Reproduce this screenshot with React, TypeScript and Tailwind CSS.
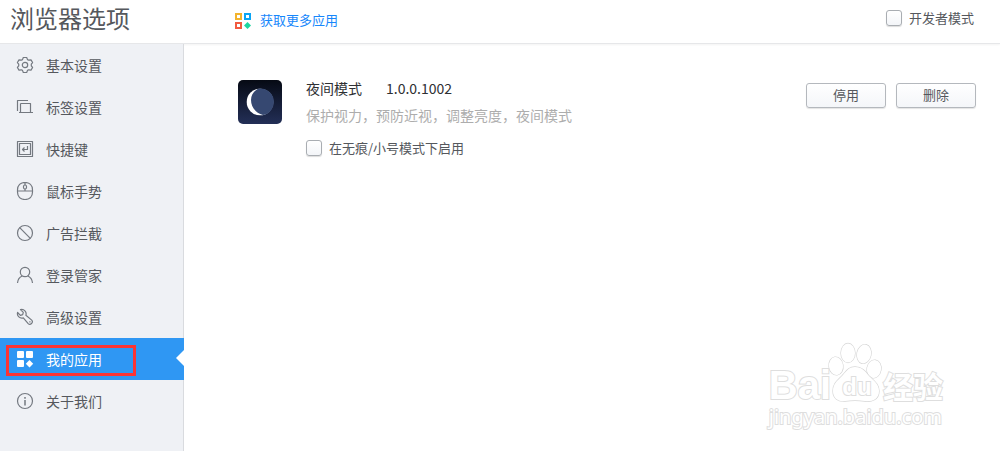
import React, { useState } from "react";

type IconProps = { children: React.ReactNode };

function LineIcon({ children }: IconProps) {
  return (
    <svg
      viewBox="0 0 18 18"
      className="size-[18px] shrink-0"
      fill="none"
      stroke="currentColor"
      strokeWidth="1.2"
      strokeLinejoin="round"
      aria-hidden="true"
    >
      {children}
    </svg>
  );
}

const items = [
  {
    label: "基本设置",
    icon: (
      <LineIcon>
        <path d="M7.300 1.500h3.400l.8 2.100 1.200.6 2.300-.4 1.600 2.800-1.300 1.500v1.800l1.300 1.500-1.600 2.800-2.300-.4-1.200.6-.8 2.100H7.300l-.8-2.100-1.200-.6-2.300.4-1.600-2.800 1.300-1.500V8.100L1.400 6.600 3 3.800l2.300.4 1.200-.6z" />
        <circle cx="9" cy="9" r="2.700" />
      </LineIcon>
    ),
  },
  {
    label: "标签设置",
    icon: (
      <LineIcon>
        <path d="M1.500 13V2.500H12M4.500 5.500H14.500V14.500M4.500 5.500V14.500M3 14.500H17" />
      </LineIcon>
    ),
  },
  {
    label: "快捷键",
    icon: (
      <LineIcon>
        <path d="M1.500 1.500h15v15h-15zM3.500 3.500h11v11h-11z" />
        <path d="M11.500 6v3.500H6.500M8.500 7.500l-2 2 2 2" />
      </LineIcon>
    ),
  },
  {
    label: "鼠标手势",
    icon: (
      <LineIcon>
        <path d="M1.500 8C1.500 3 4.500.5 9 .5S16.500 3 16.500 8v2c0 5-3 7.500-7.500 7.500S1.500 15 1.500 10zM1.500 9h15M9 .5V3M9 7v2" />
        <rect x="7.500" y="3" width="3" height="4" rx="1.500" />
      </LineIcon>
    ),
  },
  {
    label: "广告拦截",
    icon: (
      <LineIcon>
        <circle cx="9" cy="9" r="7.500" />
        <path d="M3.700 3.700l10.600 10.600" />
      </LineIcon>
    ),
  },
  {
    label: "登录管家",
    icon: (
      <LineIcon>
        <circle cx="9" cy="6" r="4.700" />
        <path d="M1.500 17c.3-3.500 2.300-6 4.700-7M16.500 17c-.3-3.500-2.300-6-4.700-7" />
      </LineIcon>
    ),
  },
  {
    label: "高级设置",
    icon: (
      <LineIcon>
        <path d="M4.500 1.600l2.800 2.800-.6 2.300-2.300.6-2.800-2.800C.6 8 4 11 7.300 9.900l4.900 5.700c2.200 2 5.500-1.200 3.500-3.500L9.900 7.300C11 4 8 .6 4.500 1.600z" />
        <path d="M13.300 13.800h1.200" />
      </LineIcon>
    ),
  },
  {
    label: "我的应用",
    icon: (
      <svg viewBox="0 0 18 18" className="size-[18px] shrink-0" fill="currentColor" aria-hidden="true">
        <rect x="1" y="1" width="7" height="7" rx="1" />
        <rect x="10" y="1" width="7" height="7" rx="1" />
        <rect x="1" y="10" width="7" height="7" rx="1" />
        <path d="M13.500 10l3.700 3.700-3.700 3.700-3.700-3.700z" />
      </svg>
    ),
  },
  {
    label: "关于我们",
    icon: (
      <LineIcon>
        <circle cx="9" cy="9" r="7.500" />
        <path d="M9 8v5.500M9 5v1.800" strokeWidth="1.500" />
      </LineIcon>
    ),
  },
];

function CheckOption({ id, label }: { id: string; label: string }) {
  return (
    <div className="flex items-center gap-[7px]">
      <input
        id={id}
        type="checkbox"
        className="size-4 appearance-none rounded-[3px] border border-[#a9adb2] bg-linear-to-b from-white to-[#f3f5f8] shadow-[0_1px_1px_#dddddd] checked:bg-[#2f97f3]"
      />
      <label htmlFor={id} className="text-[13px] leading-5 text-[#55585d]">
        {label}
      </label>
    </div>
  );
}

function ActionButton({ children }: { children: React.ReactNode }) {
  return (
    <button
      type="button"
      className="flex h-[25px] w-20 justify-center rounded-[3px] border border-[#b4b8bd] bg-linear-to-b from-white to-[#f4f6f9] text-[13px] leading-[22px] text-[#55585d] shadow-[0_1px_1px_#e4e4e4]"
    >
      {children}
    </button>
  );
}

function Watermark() {
  return (
    <div className="pointer-events-none absolute right-[57px] bottom-[22px] flex flex-col gap-[2px] text-white [paint-order:stroke_fill] [-webkit-text-stroke:2px_#dedede]">
      <div className="flex h-[60px] items-end">
        <span className="font-['Liberation_Sans',sans-serif] text-[40px] leading-9 font-bold">Bai</span>
        <div className="relative flex h-[60px] w-[52px] items-end justify-center">
          <svg viewBox="0 0 52 60" className="absolute inset-0 size-full overflow-visible" fill="white" stroke="#d6d6d6" strokeWidth="1.300" aria-hidden="true">
            <ellipse cx="5" cy="23" rx="7" ry="9" transform="rotate(-8 5 23)" />
            <ellipse cx="17" cy="10" rx="7" ry="9.500" />
            <ellipse cx="33" cy="11" rx="7" ry="9.500" transform="rotate(12 33 11)" />
            <ellipse cx="43" cy="26" rx="7" ry="9" transform="rotate(10 43 26)" />
            <path d="M24 24c7 0 10 4 14 9 5 5 10 8 10 15 0 9-8 11-14 10-7-1-13-1-20 0C7 59 2 55 2 48c0-7 4-10 8-14 5-5 7-10 14-10z" />
          </svg>
          <span className="relative mb-1 font-['Liberation_Sans',sans-serif] text-2xl leading-6 font-bold">du</span>
        </div>
        <span className="font-['Noto_Sans_CJK_SC',sans-serif] text-[30px] leading-9 font-bold">经验</span>
      </div>
      <div className="font-['Noto_Sans',sans-serif] text-xl leading-6">jingyan.baidu.com</div>
    </div>
  );
}

export default function App() {
  const [active, setActive] = useState("我的应用");

  return (
    <div className="relative flex min-h-screen flex-col bg-white font-['Noto_Sans_CJK_SC',sans-serif] text-[#55585d]">
      <header className="flex h-11 items-center border-b border-[#e6e7e9] pb-1 shadow-[0_1px_2px_#f3f3f3]">
        <h1 className="w-[235px] shrink-0 pb-1 pl-[10px] text-2xl leading-8">浏览器选项</h1>
        <a href="#apps" className="flex items-center gap-2 text-[13px] leading-5 text-[#1787fb]">
          <svg viewBox="0 0 17 17" className="mt-1 size-[17px]" fill="none" strokeWidth="2" aria-hidden="true">
            <rect x="1" y="1" width="5" height="5" stroke="#f3b32c" />
            <rect x="10" y="1" width="5" height="5" stroke="#0aa5f5" />
            <rect x="1" y="10" width="5" height="5" stroke="#f25b40" />
            <path d="M12.500 9l3.500 3.500-3.500 3.500L9 12.500z" fill="#1fd6a0" />
          </svg>
          获取更多应用
        </a>
        <div className="ml-auto pr-[26px] pb-1">
          <CheckOption id="developer" label="开发者模式" />
        </div>
      </header>

      <div className="flex grow">
        <nav className="w-[184px] shrink-0 border-r border-[#d9dbdf] bg-[#eff1f5]">
          <ul>
            {items.map(({ label, icon }) => {
              const selected = label === active;
              return (
                <li key={label} className={selected ? "relative -mr-px bg-[#2f97f3] text-white" : "relative"}>
                  <button
                    type="button"
                    aria-current={selected ? "page" : undefined}
                    onClick={() => setActive(label)}
                    className="flex h-[42px] w-full items-center gap-3 pl-4 text-left text-sm"
                  >
                    <span className={selected ? "text-white" : "text-[#747980]"}>{icon}</span>
                    {label}
                  </button>
                  {selected && (
                    <>
                      <span className="pointer-events-none absolute top-[7px] left-[6px] h-[31px] w-[130px] border-3 border-[#fb3434]" />
                      <span className="pointer-events-none absolute top-3 right-0 h-4 w-2 bg-white [clip-path:polygon(100%_0,0_50%,100%_100%)]" />
                    </>
                  )}
                </li>
              );
            })}
          </ul>
        </nav>

        <main className="min-w-0 grow pt-8 pr-6 pl-[54px]">
          <article className="flex items-start">
            <svg viewBox="0 0 44 44" className="mt-1 size-11 shrink-0" role="img" aria-label="夜间模式">
              <defs>
                <linearGradient id="night" x1="0" y1="0" x2="0" y2="1">
                  <stop offset="0" stopColor="#060a14" />
                  <stop offset="1" stopColor="#232f57" />
                </linearGradient>
              </defs>
              <rect width="44" height="44" rx="5" fill="url(#night)" />
              <circle cx="22" cy="22" r="13.300" fill="#fff" />
              <path d="M20 8.700A13.300 13.300 0 1 1 25 35C17 33 13 26 13 20c0-5 3-9 7-11.300z" fill="#364871" />
            </svg>
            <div className="ml-6 min-w-0 grow">
              <div className="flex gap-6 text-sm leading-6 text-[#2e3033]">
                <h2>夜间模式</h2>
                <span>1.0.0.1002</span>
              </div>
              <p className="mt-[3px] mb-[11px] text-sm leading-6 text-[#adadad]">保护视力，预防近视，调整亮度，夜间模式</p>
              <CheckOption id="incognito" label="在无痕/小号模式下启用" />
            </div>
            <div className="mt-[7px] flex shrink-0 gap-[10px]">
              <ActionButton>停用</ActionButton>
              <ActionButton>删除</ActionButton>
            </div>
          </article>
        </main>
      </div>
      <Watermark />
    </div>
  );
}
